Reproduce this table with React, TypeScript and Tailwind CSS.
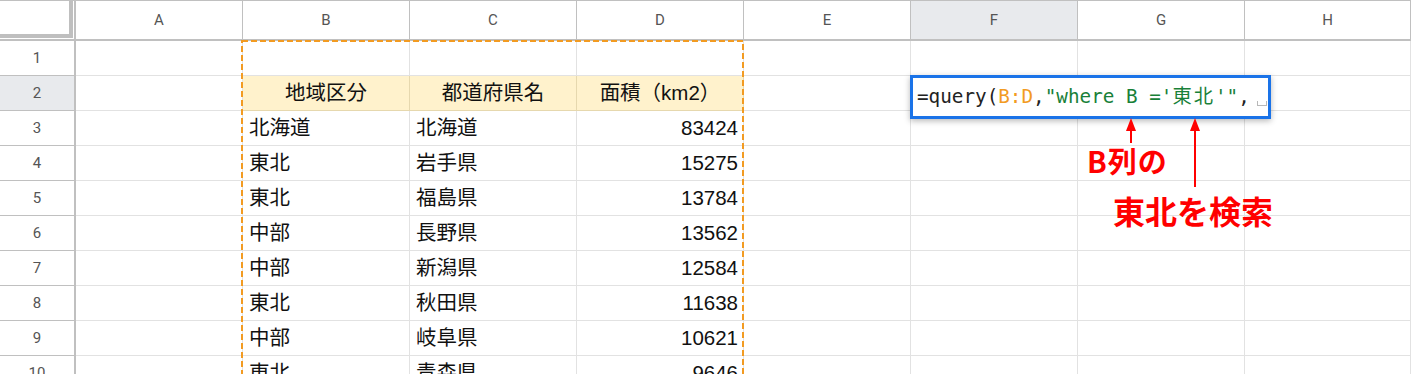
import React from "react";

const COLS = ["A", "B", "C", "D", "E", "F", "G", "H"];
const COL_W = [167, 167, 167, 167, 167, 167, 167, 166];

type Cell = { text?: string; align?: "left" | "center" | "right" };

const ROWS: { n: number; cells: Record<string, Cell>; header?: boolean }[] = [
  { n: 1, cells: {} },
  {
    n: 2,
    header: true,
    cells: {
      B: { text: "地域区分", align: "center" },
      C: { text: "都道府県名", align: "center" },
      D: { text: "面積（km2）", align: "center" },
    },
  },
  { n: 3, cells: { B: { text: "北海道" }, C: { text: "北海道" }, D: { text: "83424", align: "right" } } },
  { n: 4, cells: { B: { text: "東北" }, C: { text: "岩手県" }, D: { text: "15275", align: "right" } } },
  { n: 5, cells: { B: { text: "東北" }, C: { text: "福島県" }, D: { text: "13784", align: "right" } } },
  { n: 6, cells: { B: { text: "中部" }, C: { text: "長野県" }, D: { text: "13562", align: "right" } } },
  { n: 7, cells: { B: { text: "中部" }, C: { text: "新潟県" }, D: { text: "12584", align: "right" } } },
  { n: 8, cells: { B: { text: "東北" }, C: { text: "秋田県" }, D: { text: "11638", align: "right" } } },
  { n: 9, cells: { B: { text: "中部" }, C: { text: "岐阜県" }, D: { text: "10621", align: "right" } } },
  { n: 10, cells: { B: { text: "東北" }, C: { text: "青森県" }, D: { text: "9646", align: "right" } } },
];

const headFont = { fontFamily: "Roboto, 'Liberation Sans', sans-serif" };
const cellFont = { fontFamily: "'Liberation Sans', 'Noto Sans CJK JP', sans-serif" };

function ColumnHeader() {
  return (
    <div className="flex h-[41px] border-t border-[#c0c0c0]" style={headFont}>
      <div className="w-[76px] shrink-0 border-r-2 border-b-2 border-[#c0c0c0] bg-white">
        <div className="w-[73px] h-[37px] border-r-4 border-b-4 border-[#bfbfbf] bg-white" />
      </div>
      {COLS.map((c, i) => (
        <div
          key={c}
          style={{ width: COL_W[i] }}
          className={`shrink-0 flex items-center justify-center border-r border-b-2 border-[#c0c0c0] text-[15px] text-[#555] ${
            c === "F" ? "bg-[#e8eaed]" : "bg-white"
          }`}
        >
          {c}
        </div>
      ))}
    </div>
  );
}

function Row({ n, cells, header }: { n: number; cells: Record<string, Cell>; header?: boolean }) {
  return (
    <div className="flex h-[35px]">
      <div
        style={headFont}
        className={`w-[76px] shrink-0 flex items-center justify-center border-r-2 border-b border-[#c0c0c0] text-[15px] text-[#555] ${
          n === 2 ? "bg-[#e8eaed]" : "bg-white"
        }`}
      >
        {n}
      </div>
      {COLS.map((c, i) => {
        const cell = cells[c];
        const yellow = header && (c === "B" || c === "C" || c === "D");
        const align = cell?.align ?? "left";
        return (
          <div
            key={c}
            style={{ width: COL_W[i], ...cellFont }}
            className={`shrink-0 flex items-center border-r border-b text-[20.5px] text-[#111] whitespace-nowrap overflow-hidden ${
              yellow ? "bg-[#fff2cc] border-[#e6d8ae]" : "bg-white border-[#e2e2e2]"
            } ${
              align === "center"
                ? "justify-center"
                : align === "right"
                ? "justify-end pr-[5px]"
                : "justify-start pl-[6px]"
            }`}
          >
            {cell?.text}
          </div>
        );
      })}
    </div>
  );
}

function FormulaEditor() {
  return (
    <div
      className="absolute left-[910px] top-[75px] w-[361px] h-[44px] border-[3px] border-[#1a73e8] bg-white shadow-[0_2px_6px_rgba(0,0,0,0.28)] flex items-center pl-[4px] whitespace-nowrap text-[19.3px] text-[#222]"
      style={{ fontFamily: "'DejaVu Sans Mono', 'Noto Sans CJK JP', monospace" }}
    >
      <span>=query(</span>
      <span className="text-[#f29b22]">B:D</span>
      <span>,</span>
      <span className="text-[#188038]">
        "where B ='<span className="tracking-[2px]">東北</span>'"
      </span>
      <span>,</span>
      <span className="inline-block w-[10px] h-[5px] ml-[7px] mt-[12px] border-x border-b border-[#b8b8b8]" />
    </div>
  );
}

function Callouts() {
  const boldJp = { fontFamily: "'Noto Sans CJK JP', 'Liberation Sans', sans-serif" };
  return (
    <>
      <svg className="absolute left-0 top-0" width="1411" height="374">
        <g fill="#ff0000" stroke="#ff0000">
          <polygon points="1131,118 1126,131 1136,131" strokeWidth="0" />
          <line x1="1131" y1="130" x2="1131" y2="143" strokeWidth="2" />
          <polygon points="1195,118 1190,131 1200,131" strokeWidth="0" />
          <line x1="1195" y1="130" x2="1195" y2="187" strokeWidth="2" />
        </g>
      </svg>
      <div
        className="absolute left-[1087px] top-[146px] text-[29px] leading-none font-bold text-[#ff0000] whitespace-nowrap tracking-[1px]"
        style={boldJp}
      >
        B列の
      </div>
      <div
        className="absolute left-[1113px] top-[194px] text-[32px] leading-none font-bold text-[#ff0000] whitespace-nowrap"
        style={boldJp}
      >
        東北を検索
      </div>
    </>
  );
}

function CopyMarquee() {
  return (
    <svg className="absolute left-[240px] top-[39px]" width="506" height="360">
      <rect
        x="2"
        y="2"
        width="501"
        height="400"
        fill="none"
        stroke="#f29b22"
        strokeWidth="2"
        strokeDasharray="6 3"
      />
    </svg>
  );
}

export default function App() {
  return (
    <div className="relative w-[1411px] h-[374px] overflow-hidden bg-white">
      <ColumnHeader />
      {ROWS.map((r) => (
        <Row key={r.n} n={r.n} cells={r.cells} header={r.header} />
      ))}
      <CopyMarquee />
      <FormulaEditor />
      <Callouts />
    </div>
  );
}
